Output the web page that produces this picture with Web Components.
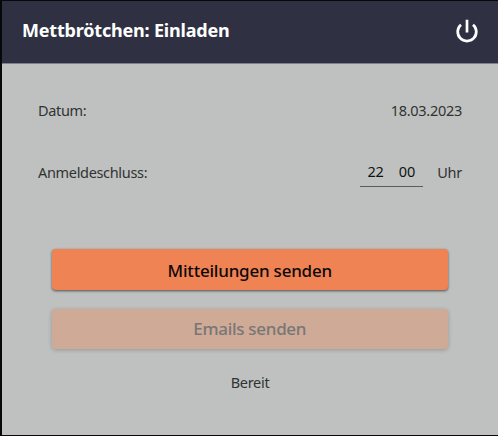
<!DOCTYPE html>
<html lang="de">
<head>
<meta charset="utf-8">
<title>Mettbrötchen: Einladen</title>
<style>
html,body{margin:0;height:100%;overflow:hidden;background:#08080c}
body{font-family:"Noto Sans","Open Sans",sans-serif}
</style>
</head>
<body>
<invite-window>
  <title-bar slot="header">Mettbrötchen: Einladen</title-bar>
  <form-row label="Datum:"><span>18.03.2023</span></form-row>
  <form-row label="Anmeldeschluss:"><time-field hours="22" minutes="00"></time-field><span>Uhr</span></form-row>
  <action-button slot="actions">Mitteilungen senden</action-button>
  <action-button slot="actions" disabled style="--spacing:-.3px">Emails senden</action-button>
  <status-text slot="status">Bereit</status-text>
</invite-window>
<script>
class Base extends HTMLElement{
  connectedCallback(){
    if(!this.shadowRoot) this.attachShadow({mode:'open'}).innerHTML=this.view();
  }
}
customElements.define('invite-window',class extends Base{
  view(){return `<style>
    :host{display:flex;flex-direction:column;box-sizing:border-box;height:100vh;border:solid #08080c;border-width:1px 0 1px 2px;background:#bfc1c0}
    main{display:flex;flex-direction:column;padding:15px 36px 0}
    .actions{display:flex;flex-direction:column;gap:18px;padding:46px 50px 0 49.5px}
    .status{display:flex;justify-content:center;padding-top:24px}
  </style>
  <slot name="header"></slot>
  <main><slot></slot></main>
  <div class="actions"><slot name="actions"></slot></div>
  <div class="status"><slot name="status"></slot></div>`}
});
customElements.define('title-bar',class extends Base{
  view(){return `<style>
    :host{display:flex;align-items:center;justify-content:space-between;box-sizing:border-box;height:63px;padding:0 18px 4px 20px;background:#2f3142;border-bottom:1px solid #7d7f88;color:#fff;font-size:18px;font-weight:700;letter-spacing:-.19px}
    svg{display:block;margin-top:2px}
  </style><span><slot></slot></span>
  <svg width="26" height="26" viewBox="0 0 26 26" fill="none" stroke="#fff" stroke-width="2.7"><path d="M13 1.8v12.8M7 6.7a9.3 9.3 0 1 0 12 0"/></svg>`}
});
customElements.define('form-row',class extends Base{
  view(){return `<style>
    :host{display:flex;align-items:center;justify-content:space-between;height:62px;font-size:14.5px;line-height:20px;color:#303332}
    .label{letter-spacing:-.33px}
    .value{display:flex;align-items:center;gap:14.5px;letter-spacing:-.28px}
  </style><span class="label">${this.getAttribute('label')}</span><div class="value"><slot></slot></div>`}
});
customElements.define('time-field',class extends Base{
  view(){return `<style>
    :host{display:flex;justify-content:center;gap:15px;box-sizing:border-box;width:63px;height:30px;padding-top:4px;border-bottom:1px solid #5b5d5c;color:#111;letter-spacing:-.1px}
  </style><span>${this.getAttribute('hours')}</span><span>${this.getAttribute('minutes')}</span>`}
});
customElements.define('action-button',class extends Base{
  view(){return `<style>
    :host{display:block}
    button{display:block;width:100%;height:41px;margin:0;padding:0;border:0;border-radius:4px;background:#f08354;color:#0b0807;font:500 17px/43px "Noto Sans","Open Sans",sans-serif;letter-spacing:var(--spacing,-.22px);box-shadow:0 1px 3px rgba(0,0,0,.45),0 1px 2px rgba(0,0,0,.2)}
    :host([disabled]) button{height:40px;margin-top:1px;line-height:40px;background:#cfaa97;color:#777776;box-shadow:0 1px 4px rgba(0,0,0,.22)}
  </style><button ${this.hasAttribute('disabled')?'disabled':''}><slot></slot></button>`}
});
customElements.define('status-text',class extends Base{
  view(){return `<style>:host{display:block;font-size:14.5px;line-height:20px;letter-spacing:-.3px;color:#303332;margin-top:-1px}</style><slot></slot>`}
});
</script>
</body>
</html>
